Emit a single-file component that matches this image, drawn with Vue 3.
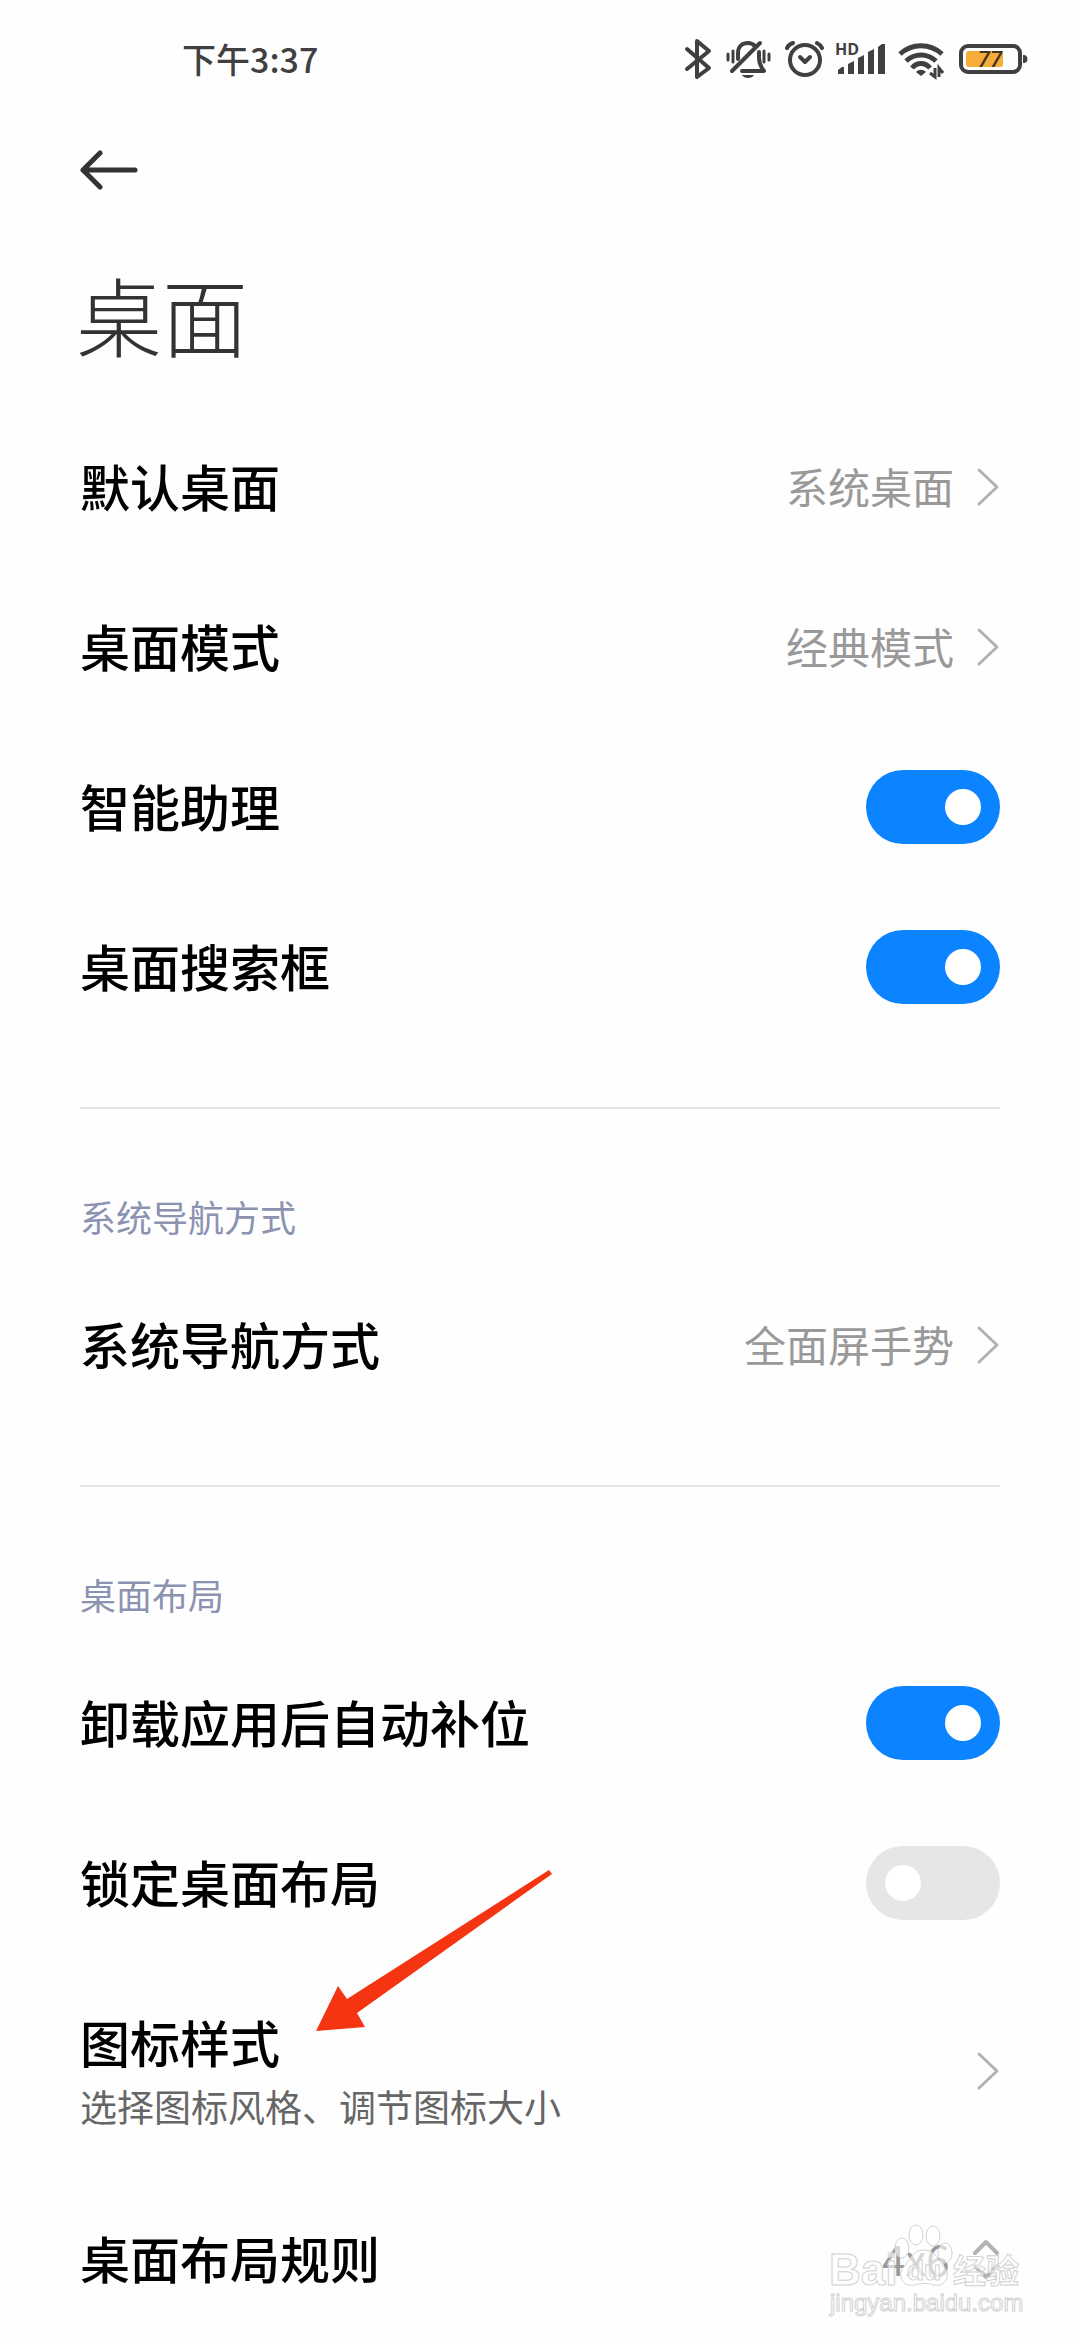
<script setup>
import { ref } from 'vue';

const battery = ref(77);
const layoutRule = ref('4x6');

const sections = ref([
  {
    id: 'general',
    title: '',
    items: [
      { id: 'launcher', type: 'link', label: '默认桌面', value: '系统桌面' },
      { id: 'mode', type: 'link', label: '桌面模式', value: '经典模式' },
      { id: 'assistant', type: 'switch', label: '智能助理', on: true },
      { id: 'search', type: 'switch', label: '桌面搜索框', on: true },
    ],
  },
  {
    id: 'navigation',
    title: '系统导航方式',
    items: [
      { id: 'gesture', type: 'link', label: '系统导航方式', value: '全面屏手势' },
    ],
  },
  {
    id: 'layout',
    title: '桌面布局',
    items: [
      { id: 'fill', type: 'switch', label: '卸载应用后自动补位', on: true },
      { id: 'lock', type: 'switch', label: '锁定桌面布局', on: false },
      { id: 'icons', type: 'link', label: '图标样式', desc: '选择图标风格、调节图标大小', pointer: true },
      { id: 'rule', type: 'select', label: '桌面布局规则' },
    ],
  },
]);
</script>

<template>
  <div class="page">
    <header class="status-bar">
      <span class="time">下午3:37</span>
      <div class="status-icons">
        <svg width="31" height="48" viewBox="0 0 31 48" class="line">
          <path d="M3 13 L25 32 L13 41 V5 L25 15 L3 33" />
        </svg>
        <svg width="49" height="48" viewBox="0 0 49 48" class="line">
          <path d="M13 23 V17 C13 11 17 7 23 7 C26 7 28 8 30 10" />
          <path d="M34 16 V22 C34 28 36 31 39 35 H17" />
          <path d="M35 7 L7 35" />
          <path d="M3 18 V24 M8 15 V26 M39 15 V26 M44 18 V24" stroke-width="3" />
          <path d="M17 39 H29 C27 43 19 43 17 39 Z" class="solid" />
        </svg>
        <svg width="40" height="48" viewBox="0 0 40 48" class="line">
          <circle cx="21" cy="24" r="15" />
          <path d="M16 21 L21 26 L26 21" />
          <path d="M3 12 C4 10 6 8 9 7 M33 7 C35 8 37 10 38 12" />
        </svg>
        <svg width="53" height="48" viewBox="0 0 53 48" class="solid">
          <text x="1" y="19" class="hd">HD</text>
          <path d="M4 38 V34 L8 31 H10 V38 Z" />
          <path d="M14 38 V28 L20 25 V38 Z" />
          <path d="M24 38 V22 L30 19 V38 Z" />
          <path d="M34 38 V16 L40 13 V38 Z" />
          <path d="M44 38 V11 L48 8 H51 V38 Z" />
        </svg>
        <svg width="51" height="48" viewBox="0 0 51 48" class="line wifi">
          <path d="M3 18 C15 7 33 7 45 18" />
          <path d="M9 25 C18 17 30 17 39 25" />
          <path d="M15 32 C20 26 28 26 33 32" />
          <path d="M19 36 C22 33 26 33 29 36 L24 40 Z" class="solid" />
          <path d="M38 32 V41 L33 37 M42 41 V32 L46 37" stroke-width="3" class="traffic" />
        </svg>
        <svg width="70" height="48" viewBox="0 0 70 48" class="line">
          <rect x="8" y="15" width="37" height="16" rx="3" class="charge" />
          <rect x="3" y="10" width="59" height="26" rx="7" />
          <path d="M65 19 C71 18 71 28 65 27 Z" class="solid" />
          <text x="32" y="31" class="percent">{{ battery }}</text>
        </svg>
      </div>
    </header>

    <nav class="toolbar">
      <button type="button" class="back" aria-label="返回">
        <svg width="60" height="44" viewBox="0 0 60 44">
          <path d="M55 22 H3 M20 5 L3 22 L20 39" />
        </svg>
      </button>
    </nav>

    <h1>桌面</h1>

    <main>
      <section v-for="section in sections" :key="section.id">
        <h2 v-if="section.title">{{ section.title }}</h2>

        <div v-for="item in section.items" :key="item.id" class="item">
          <button v-if="item.type === 'link'" type="button" class="row">
            <span class="text">
              <span class="label">{{ item.label }}</span>
              <span v-if="item.desc" class="desc">{{ item.desc }}</span>
            </span>
            <span class="end">
              <span v-if="item.value" class="value">{{ item.value }}</span>
              <svg width="24" height="40" viewBox="0 0 24 40" class="chevron">
                <path d="M3 3 L21 20 L3 37" />
              </svg>
            </span>
          </button>

          <label v-else-if="item.type === 'switch'" class="row">
            <span class="label">{{ item.label }}</span>
            <input v-model="item.on" type="checkbox" class="switch">
          </label>

          <label v-else class="row">
            <span class="label">{{ item.label }}</span>
            <span class="end">
              <select v-model="layoutRule" class="value">
                <option value="4x6">4x6</option>
              </select>
              <svg width="28" height="40" viewBox="0 0 28 40" class="chevron updown">
                <path d="M3 14 L14 3 L25 14 M3 27 L14 38 L25 27" />
              </svg>
            </span>
          </label>

          <svg v-if="item.pointer" class="pointer" width="236" height="161" viewBox="0 0 236 161">
            <path d="M233 0 L236 4 L41 143 L49 157 L0 161 L22 116 L31 129 Z" />
          </svg>
        </div>
      </section>
    </main>

    <svg class="watermark" width="204" height="104" viewBox="0 0 204 104">
      <text x="3" y="63" class="brand">Bai</text>
      <ellipse cx="76" cy="26" rx="7" ry="10" />
      <ellipse cx="90" cy="13" rx="7" ry="10" />
      <ellipse cx="107" cy="14" rx="7" ry="10" />
      <ellipse cx="119" cy="31" rx="7" ry="10" />
      <path d="M98 28 C110 28 113 40 119 46 C125 54 119 65 108 63 C101 61 95 61 88 63 C77 65 71 54 77 46 C83 40 86 28 98 28 Z" />
      <text x="81" y="58" class="du">du</text>
      <text x="127" y="61" class="cn">经验</text>
      <text x="4" y="89" class="site">jingyan.baidu.com</text>
    </svg>
  </div>
</template>

<style>
body {
  margin: 0;
  background: #fefefe;
}
</style>

<style scoped>
.page {
  position: relative;
  min-height: 100vh;
  overflow: hidden;
  background: #fefefe;
  color: #000;
  font-family: "Noto Sans CJK SC", "Noto Sans", sans-serif;
}
.status-bar {
  display: flex;
  align-items: center;
  justify-content: space-between;
  height: 120px;
  padding: 0 52px 0 182px;
  color: #404040;
}
.time {
  padding-bottom: 2px;
  font-size: 34px;
  font-weight: 500;
  line-height: 48px;
}
.status-icons {
  display: flex;
  gap: 10px;
}
svg {
  display: block;
  flex: none;
}
.line {
  fill: none;
  stroke: #404040;
  stroke-width: 4;
  stroke-linecap: round;
  stroke-linejoin: round;
}
.solid {
  fill: #404040;
  stroke: none;
}
.wifi {
  stroke-width: 5;
  stroke-linecap: butt;
}
.traffic {
  stroke-linejoin: miter;
}
.charge {
  fill: #f5ac38;
  stroke: none;
}
.hd {
  font-family: "Open Sans", sans-serif;
  font-size: 16px;
  font-weight: 700;
}
.percent {
  fill: #45321a;
  stroke: none;
  font-family: Roboto, sans-serif;
  font-size: 22px;
  font-style: italic;
  font-weight: 500;
  text-anchor: middle;
}
.toolbar {
  display: flex;
  align-items: center;
  height: 100px;
  padding: 0 80px;
}
button {
  padding: 0;
  border: 0;
  background: none;
  color: inherit;
  font: inherit;
  text-align: left;
  cursor: pointer;
}
.back path {
  fill: none;
  stroke: #333;
  stroke-width: 5;
  stroke-linecap: round;
  stroke-linejoin: round;
}
h1 {
  margin: 0;
  padding: 34px 76px 33px;
  color: #333;
  font-size: 86px;
  font-weight: 300;
  line-height: 120px;
}
main {
  padding: 0 80px;
}
section + section {
  margin-top: 60px;
  border-top: 2px solid #e5e5e5;
}
h2 {
  margin: 0;
  padding: 82px 0 24px;
  color: #8c93b0;
  font-size: 36px;
  font-weight: 400;
  line-height: 50px;
}
.item {
  position: relative;
}
.row {
  display: flex;
  align-items: center;
  justify-content: space-between;
  box-sizing: border-box;
  width: 100%;
  padding: 43px 0;
  cursor: pointer;
}
.text {
  display: flex;
  flex-direction: column;
}
.label {
  padding-bottom: 4px;
  font-size: 50px;
  font-weight: 500;
  line-height: 70px;
}
.desc {
  padding-bottom: 4px;
  color: #666;
  font-size: 37px;
  line-height: 52px;
}
.end {
  display: flex;
  align-items: center;
  gap: 22px;
}
.value {
  padding: 0 0 2px;
  color: #999;
  font-size: 42px;
  line-height: 60px;
}
select.value {
  appearance: none;
  border: 0;
  background: none;
  font-family: inherit;
}
.chevron {
  fill: none;
  stroke: #b2b2b2;
  stroke-width: 3;
  stroke-linecap: round;
  stroke-linejoin: round;
}
.updown {
  stroke-width: 4;
}
.switch {
  appearance: none;
  display: flex;
  align-items: center;
  box-sizing: border-box;
  width: 134px;
  height: 74px;
  margin: 0;
  padding: 0 19px;
  border-radius: 37px;
  background: #e6e6e6;
  cursor: pointer;
}
.switch::before {
  content: "";
  width: 36px;
  height: 36px;
  border-radius: 50%;
  background: #fff;
}
.switch:checked {
  justify-content: flex-end;
  background: #0d84ff;
}
.pointer {
  position: absolute;
  top: -93px;
  left: 236px;
  fill: #f53411;
  pointer-events: none;
}
.watermark {
  position: absolute;
  right: 50px;
  bottom: 14px;
  fill: rgba(255, 255, 255, 0.6);
  stroke: #d2d2d2;
  stroke-width: 1;
  pointer-events: none;
}
.brand,
.du {
  font-family: "Liberation Sans", sans-serif;
  font-size: 44px;
  font-weight: 700;
}
.du {
  font-size: 28px;
}
.cn {
  font-size: 33px;
  font-weight: 700;
}
.site {
  font-family: "Liberation Sans", sans-serif;
  font-size: 24px;
}
</style>
